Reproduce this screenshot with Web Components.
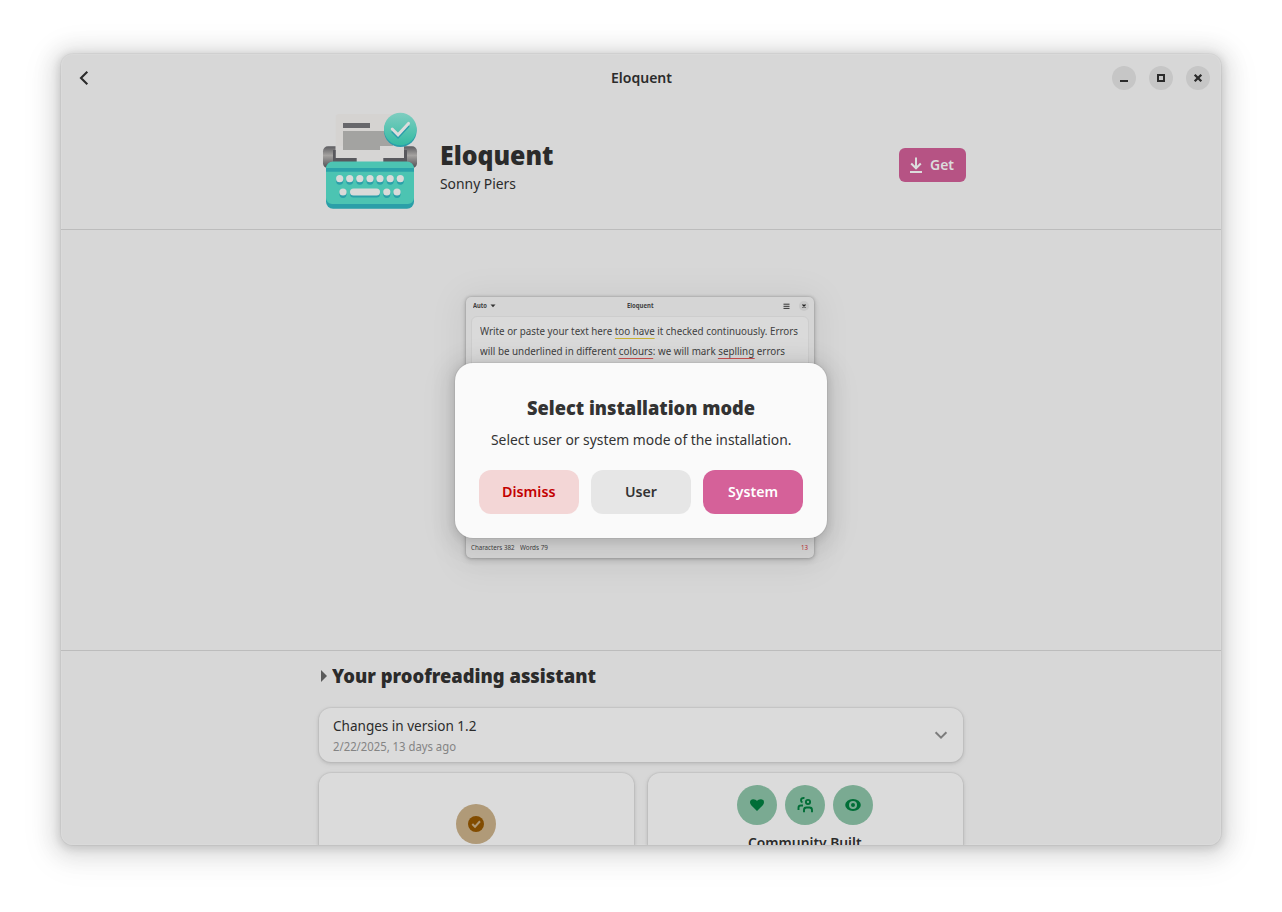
<!DOCTYPE html>
<html lang="en"><head><meta charset="utf-8"><title>Eloquent</title>
<style>
html,body{margin:0;height:100%}
body{background:#fff;font-family:"Noto Sans","Open Sans",sans-serif;overflow:hidden}
</style></head><body>
<store-app></store-app>
<script>
const define=(name,html,init)=>{
  const t=document.createElement('template');t.innerHTML=html;
  customElements.define(name,class extends HTMLElement{
    constructor(){super();this.attachShadow({mode:'open'}).append(t.content.cloneNode(true));}
    connectedCallback(){if(init)init(this);}
  });
};

/* Single-line label; "w" gives its width, to which its glyphs are condensed. */
define('ui-text',`<style>:host{display:block;white-space:nowrap;flex:none}span{display:inline-block;transform-origin:0 50%}</style><span><slot></slot></span>`,el=>{
  const w=+el.getAttribute('w');if(!w)return;
  el.style.width=w+'px';
  const s=el.shadowRoot.querySelector('span');
  s.style.transform='scaleX('+(w/s.getBoundingClientRect().width).toFixed(4)+')';
});

define('window-button',`<style>:host{display:flex;width:24px;height:24px;border-radius:50%;background:#c6c6c6;align-items:center;justify-content:center}</style><slot></slot>`);

define('title-bar',`<style>
:host{display:grid;grid-template-columns:1fr auto 1fr;align-items:center;height:48px;box-sizing:border-box;padding:0 11px 0 15px;color:#2b2b2b}
.t{font-size:15px;line-height:20px;font-weight:650;padding-bottom:2px;margin-right:3px}
.b{display:flex;gap:13px;justify-content:flex-end}svg{display:block}
</style>
<svg width="16" height="16" viewBox="0 0 16 16"><path d="M11.3 1.7 5 8l6.3 6.3" fill="none" stroke="#2b2b2b" stroke-width="2.1"/></svg>
<ui-text class="t" w="61">Eloquent</ui-text>
<div class="b">
<window-button><svg width="16" height="16"><path d="M4 10h8v2H4z" fill="#2b2b2b"/></svg></window-button>
<window-button><svg width="16" height="16"><path d="M5 5h6v6H5z" fill="none" stroke="#2b2b2b" stroke-width="2"/></svg></window-button>
<window-button><svg width="16" height="16"><path d="m4.700 4.700 6.600 6.600m0-6.600-6.600 6.600" stroke="#2b2b2b" stroke-width="2.300"/></svg></window-button>
</div>`);

define('typewriter-icon',`<style>:host{display:block;width:96px;height:98px}svg{display:block}</style>
<svg width="96" height="98" viewBox="0 0 96 98">
<defs>
<linearGradient id="r" x2="0" y2="1"><stop offset="0" stop-color="#5c5c60"/><stop offset=".42" stop-color="#a5a3a1"/><stop offset="1" stop-color="#4d4d52"/></linearGradient>
<linearGradient id="c" x2="0" y2="1"><stop offset="0" stop-color="#7fcdc0"/><stop offset="1" stop-color="#34bba3"/></linearGradient>
</defs>
<rect x="1" y="34.2" width="18" height="22" rx="5" fill="url(#r)"/><rect x="77" y="34.2" width="18" height="22" rx="5" fill="url(#r)"/>
<path d="M17 2h62v48H13.700V5.300Q13.700 2 17 2z" fill="#d5d3d1"/>
<path d="M13.700 34h68.300v16H13.700z" fill="#d6d5d4"/>
<path d="M11 38h2.700v8h21v4H11zM85 38h-3v8H61.300v4H85z" fill="#58585d"/>
<path d="M21 11h27v5H21z" fill="#67676b"/><path d="M21 19h50v15H58v4H21z" fill="#a3a3a1"/>
<rect x="4" y="50" width="88" height="46.800" rx="7" fill="#2a9fa8"/>
<path d="M11 49.400h74a7 7 0 0 1 7 7V86a6 6 0 0 1-6 6H10a6 6 0 0 1-6-6V56.400a7 7 0 0 1 7-7z" fill="#4cc4b2"/>
<path d="M4 56h88v3.800H4z" fill="#2ba3a9"/>
<g fill="#2aa0a9" transform="translate(0 2)"><ellipse cx="17.7" cy="66.7" rx="3.6" ry="4"/><ellipse cx="27.7" cy="66.7" rx="3.6" ry="4"/><ellipse cx="37.8" cy="66.7" rx="3.6" ry="4"/><ellipse cx="48" cy="66.7" rx="3.6" ry="4"/><ellipse cx="58" cy="66.7" rx="3.6" ry="4"/><ellipse cx="68.2" cy="66.7" rx="3.6" ry="4"/><ellipse cx="78.3" cy="66.7" rx="3.6" ry="4"/><ellipse cx="21" cy="80" rx="3.6" ry="4"/><rect x="28" y="76.6" width="30" height="7" rx="3.5"/><ellipse cx="64.8" cy="80" rx="3.6" ry="4"/><ellipse cx="75" cy="80" rx="3.6" ry="4"/></g>
<g fill="#d9dad9"><circle cx="17.7" cy="66.7" r="3.6"/><circle cx="27.7" cy="66.7" r="3.6"/><circle cx="37.8" cy="66.7" r="3.6"/><circle cx="48" cy="66.7" r="3.6"/><circle cx="58" cy="66.7" r="3.6"/><circle cx="68.2" cy="66.7" r="3.6"/><circle cx="78.3" cy="66.7" r="3.6"/><circle cx="21" cy="80" r="3.6"/><rect x="28" y="76.6" width="30" height="7" rx="3.5"/><circle cx="64.8" cy="80" r="3.6"/><circle cx="75" cy="80" r="3.6"/></g>
<circle cx="78.3" cy="18.8" r="16.3" fill="#2a9daa"/><circle cx="78.3" cy="17" r="16.3" fill="url(#c)"/>
<path d="m70.200 19 5.800 5.800 10.500-11.400" fill="none" stroke="#2a9daa" stroke-width="3"/>
<path d="m70.200 17 5.800 5.800 10.500-11.400" fill="none" stroke="#dcdcdc" stroke-width="3" stroke-linecap="round"/>
</svg>`);

define('app-hero',`<style>
:host{display:flex;justify-content:center;height:127px;border-bottom:1px solid #bcbcbc;box-sizing:content-box;color:#2b2b2b}
.c{width:648px;display:flex;align-items:flex-start;padding:10px 0 0 4px;margin-right:-2px;box-sizing:border-box}
.n{margin:26px 0 0 21.500px;flex:1}
.h{font-size:26.500px;font-weight:900;line-height:34px}.d{font-size:15px;line-height:20px;margin-top:1px}
.g{display:flex;align-items:center;width:67px;height:34px;box-sizing:border-box;padding-left:9px;gap:6px;background:#b65384;border-radius:6px;margin-top:36px;color:#dcdcdc;font-weight:600;font-size:15px;line-height:20px}
.g ui-text{padding-bottom:2px}svg{display:block}
</style><div class="c"><typewriter-icon></typewriter-icon>
<div class="n"><ui-text class="h" w="113.500">Eloquent</ui-text><ui-text class="d" w="76">Sonny Piers</ui-text></div>
<div class="g"><svg width="16" height="18" viewBox="0 0 16 18"><path d="M8 1.500V12M3.200 7.500 8 12.300l4.800-4.800M2 16h12" fill="none" stroke="#dcdcdc" stroke-width="2"/></svg><ui-text w="24">Get</ui-text></div></div>`);

define('app-preview',`<style>
:host{display:flex;flex-direction:column;width:348px;height:261px;margin-top:.500px;border-radius:5px;background:#d5d5d5;box-shadow:0 0 3px rgba(0,0,0,.28),0 2px 6px rgba(0,0,0,.16),0 3px 34px 8px rgba(0,0,0,.05);color:#404040}
.h{display:grid;grid-template-columns:1fr auto 1fr;align-items:center;height:19.500px;padding:0 5.500px 0 7px;font-size:6.200px;line-height:8px;font-weight:700}
.h>ui-text{margin-right:1px}
.l,.r{display:flex;align-items:center}.l{gap:3px}.r{justify-content:flex-end;gap:8.500px}
.x{width:10px;height:10px;border-radius:50%;background:#c8c8c8}
.e{flex:1;margin:0 5px;border:1px solid #cdcdcd;border-radius:6px;background:#dadada;padding:5px 0 0 8px;font-size:9.900px;line-height:19.500px}
u{text-decoration:none;border-bottom:1px solid #cb5050}u.y{border-color:#c9b233}
.f{display:flex;height:20px;align-items:center;padding:0 6px 0 5px;font-size:6.200px;line-height:8px;gap:5px}.f ui-text:last-child{margin-left:auto;color:#c03038}
svg{display:block}
</style>
<div class="h"><div class="l"><ui-text w="14">Auto</ui-text><svg width="6" height="4"><path d="M.5.5h5L3 3.300z" fill="#333"/></svg></div><ui-text w="26.500">Eloquent</ui-text>
<div class="r"><svg width="7" height="7"><path d="M.5 1.200h6M.5 3.300h6M.5 5.400h6" stroke="#333"/></svg><svg class="x" viewBox="0 0 10 10"><path d="m3.500 3.500 3 3m0-3-3 3" stroke="#222" stroke-width="1.200"/></svg></div></div>
<div class="e"><ui-text w="318">Write or paste your text here <u class="y">too have</u> it checked continuously. Errors</ui-text><ui-text w="305">will be underlined in different <u>colours</u>: we will mark <u>seplling</u> errors</ui-text></div>
<div class="f"><ui-text w="43.500">Characters 382</ui-text><ui-text w="28">Words 79</ui-text><ui-text w="7">13</ui-text></div>`);

define('ui-card',`<style>:host{display:block;box-sizing:border-box;border-radius:12px;background:#dbdbdb;box-shadow:0 0 0 1px rgba(0,0,0,.035),0 1px 3px 1px rgba(0,0,0,.09),0 2px 6px 2px rgba(0,0,0,.03)}</style><slot></slot>`);

define('round-badge',`<style>:host{display:flex;width:40px;height:40px;border-radius:50%;align-items:center;justify-content:center;background:var(--bg,#7aaa92)}</style><slot></slot>`);

define('app-details',`<style>
:host{display:flex;flex-direction:column;align-items:center;color:#2b2b2b}
.c{width:644px}
.s{display:flex;align-items:center;gap:5px;height:30px;margin-top:10px;padding-left:2px}
.s ui-text{font-size:20px;line-height:30px;font-weight:900}
.v{height:54px;margin-top:17px;display:flex;align-items:center;justify-content:space-between;padding:0 14px 0 14px}
.v .a{font-size:15px;line-height:20px}.v .b{font-size:12px;line-height:18px;color:#848484;margin:3px 0 -1px}
.g{display:grid;grid-template-columns:315px 315px;gap:14px;margin-top:11px}.g ui-card{height:130px;display:flex;flex-direction:column;align-items:center;padding-right:1px}
.p{margin-top:31px}.q{display:flex;gap:8px;margin:12px 0 7px}.k{font-size:15px;font-weight:600;line-height:20px}svg{display:block}
</style><div class="c">
<div class="s"><svg width="6" height="12"><path d="M0 0v12l6-6z" fill="#5a5a5a"/></svg><ui-text w="264">Your proofreading assistant</ui-text></div>
<ui-card class="v"><div><ui-text class="a" w="143.500">Changes in version 1.2</ui-text><ui-text class="b" w="123">2/22/2025, 13 days ago</ui-text></div>
<svg width="16" height="16"><path d="M2.600 5.300 8 10.700l5.400-5.400" fill="none" stroke="#7c7c7c" stroke-width="2"/></svg></ui-card>
<div class="g"><ui-card><round-badge class="p" style="--bg:#b09a78"><svg width="16" height="16"><circle cx="8" cy="8" r="8" fill="#824c00"/><path d="m4.300 8 2.700 2.700 5-5.400" fill="none" stroke="#b09a78" stroke-width="2"/></svg></round-badge></ui-card>
<ui-card><div class="q">
<round-badge><svg width="16" height="16"><path d="M8 14 2.200 8.200C.2 6 .6 2.200 4.200 2.200 6 2.200 7.200 3 8 4c.8-1 2-1.800 3.800-1.800 3.600 0 4 3.800 2 6z" fill="#006e37"/></svg></round-badge>
<round-badge><svg width="16" height="16"><g fill="none" stroke="#006e37" stroke-width="1.900"><circle cx="11" cy="5" r="2.100"/><path d="M7.500 1.200C5.500.6 4 1.600 4 3.200 4 4.300 4.600 5 5.500 5.200M1.500 13v-2.200C1.500 9.200 2.500 8.500 4 8.500h2M7 15.300v-2.300c0-1.800 1-2.500 2.500-2.500h3c1.700 0 2.500.8 2.500 2.500v2.300"/></g></svg></round-badge>
<round-badge><svg width="16" height="16"><ellipse cx="8" cy="8" rx="7.800" ry="6" fill="#006e37"/><circle cx="8" cy="8" r="3" fill="none" stroke="#7aaa92" stroke-width="2"/></svg></round-badge></div>
<ui-text class="k" w="113.500">Community Built</ui-text></ui-card></div></div>`);

define('dialog-button',`<style>:host{display:flex;flex:1;height:44px;box-sizing:border-box;padding-bottom:2px;border-radius:12px;align-items:center;justify-content:center;background:var(--bg,#e6e6e6);color:var(--fg,#333);font-size:15px;line-height:20px;font-weight:600}</style><slot></slot>`);

define('mode-dialog',`<style>
:host{display:flex;flex-direction:column;align-items:center;box-sizing:border-box;width:372px;height:175px;padding:30px 24px 24px;border-radius:18px;background:#fafafa;color:#333;box-shadow:0 0 0 1px rgba(0,0,0,.05),0 2px 8px 2px rgba(0,0,0,.1),0 3px 20px 10px rgba(0,0,0,.05),0 6px 32px 16px rgba(0,0,0,.025)}
.t{font-size:20px;font-weight:900;line-height:30px}.m{font-size:15px;line-height:20px;margin-top:6px}.b{display:flex;gap:12px;align-self:stretch;margin-top:auto}
</style><ui-text class="t" w="228">Select installation mode</ui-text><ui-text class="m" w="300.500">Select user or system mode of the installation.</ui-text>
<div class="b"><dialog-button style="--bg:#f3d6d6;--fg:#c30000"><ui-text w="53.500">Dismiss</ui-text></dialog-button><dialog-button><ui-text w="32">User</ui-text></dialog-button><dialog-button style="--bg:#d56199;--fg:#fff"><ui-text w="50">System</ui-text></dialog-button></div>`);

define('store-app',`<style>
:host{display:block;box-sizing:border-box;width:1282px;height:912px;padding:54px 61px 67px}
.w{position:relative;width:1160px;height:791px;border-radius:12px;background:#d7d7d7;box-shadow:0 0 0 1px rgba(0,0,0,.04),0 2px 8px 2px rgba(0,0,0,.13),0 3px 20px 10px rgba(0,0,0,.09),0 6px 32px 16px rgba(0,0,0,.04)}
.i{height:100%;overflow:hidden;border-radius:12px;box-shadow:inset 0 0 0 1px #dadada}
.p{border-bottom:1px solid #bcbcbc;display:flex;justify-content:center;align-items:flex-start;padding-top:66px;height:354px}
app-preview{margin-right:2px}
.o{position:absolute;inset:2px 0 0;display:flex;align-items:center;justify-content:center}
</style><div class="w"><div class="i"><title-bar></title-bar><app-hero></app-hero><div class="p"><app-preview></app-preview></div><app-details></app-details></div><div class="o"><mode-dialog></mode-dialog></div></div>`);
</script></body></html>
